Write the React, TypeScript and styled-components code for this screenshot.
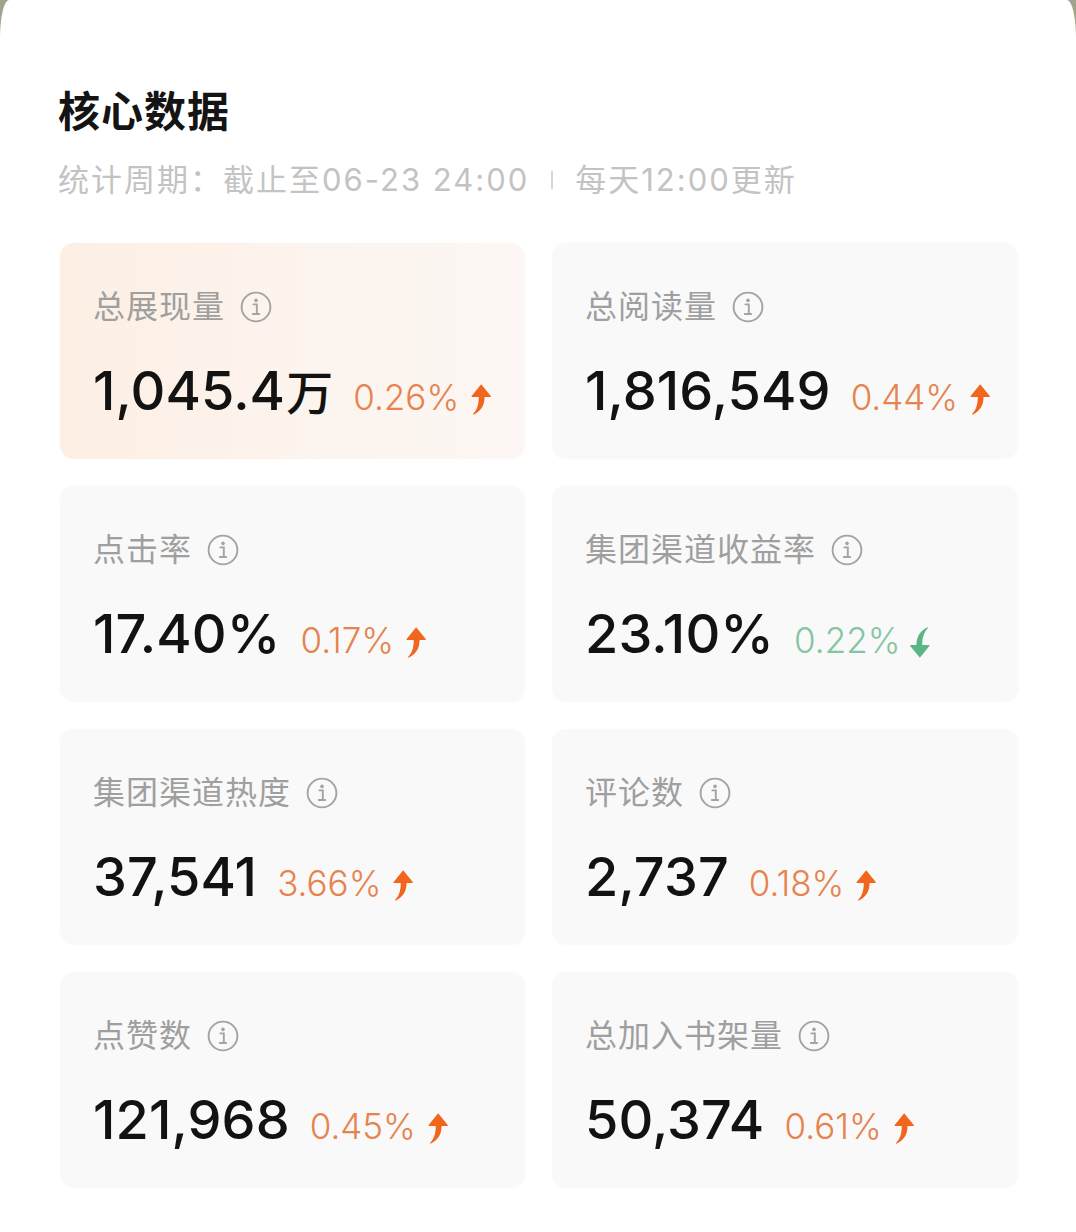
import React from 'react';
import styled, { createGlobalStyle } from 'styled-components';

const FONT_STACK = `Inter, "Noto Sans CJK SC", sans-serif`;

const GlobalStyle = createGlobalStyle`
  html, body {
    margin: 0;
    padding: 0;
    background: #a3a28c;
  }
  body {
    font-family: ${FONT_STACK};
  }
`;

type Trend = 'up' | 'down';

interface Metric {
  label: string;
  value: string;
  unit?: string;
  change: string;
  trend: Trend;
  highlight?: boolean;
}

const METRICS: Metric[] = [
  { label: '总展现量', value: '1,045.4', unit: '万', change: '0.26%', trend: 'up', highlight: true },
  { label: '总阅读量', value: '1,816,549', change: '0.44%', trend: 'up' },
  { label: '点击率', value: '17.40%', change: '0.17%', trend: 'up' },
  { label: '集团渠道收益率', value: '23.10%', change: '0.22%', trend: 'down' },
  { label: '集团渠道热度', value: '37,541', change: '3.66%', trend: 'up' },
  { label: '评论数', value: '2,737', change: '0.18%', trend: 'up' },
  { label: '点赞数', value: '121,968', change: '0.45%', trend: 'up' },
  { label: '总加入书架量', value: '50,374', change: '0.61%', trend: 'up' },
];

const Sheet = styled.div`
  min-height: 1232px;
  box-sizing: border-box;
  background: #ffffff;
  border-radius: 9px 9px 0 0 / 38px 38px 0 0;
  padding: 87px 58px 40px 58px;
`;

const Title = styled.h1`
  margin: 0;
  font-size: 42px;
  line-height: 50px;
  font-weight: 700;
  color: #141414;
  letter-spacing: 1px;
`;

const Subtitle = styled.div`
  display: flex;
  align-items: center;
  margin-top: 23px;
  font-size: 31px;
  line-height: 40px;
  letter-spacing: 2px;
  color: #c3c3c3;
  font-weight: 400;
`;

const Divider = styled.span`
  display: inline-block;
  width: 2px;
  height: 18px;
  margin: 0 22px 0 22px;
  background: #d6d6d6;
`;

const Grid = styled.div`
  display: grid;
  grid-template-columns: 465px 466px;
  grid-auto-rows: 216px;
  column-gap: 27px;
  row-gap: 27px;
  margin-top: 43px;
  margin-left: 2px;
`;

const Card = styled.div<{ $highlight?: boolean }>`
  box-sizing: border-box;
  border-radius: 14px;
  padding: 44px 32px 0 33px;
  background: ${({ $highlight }) =>
    $highlight ? 'linear-gradient(90deg, #fdefe4 0%, #fcf4ee 55%, #fcf7f4 100%)' : '#f9f9f9'};
  box-shadow: 0 0 6px rgba(0, 0, 0, 0.015);
`;

const LabelRow = styled.div`
  display: flex;
  align-items: center;
  gap: 15px;
  height: 40px;
`;

const Label = styled.span`
  font-size: 32px;
  line-height: 40px;
  color: #9f9f9f;
  letter-spacing: 1px;
  white-space: nowrap;
`;

const ValueRow = styled.div`
  display: flex;
  align-items: baseline;
  margin-top: 34px;
  height: 60px;
  white-space: nowrap;
`;

const Value = styled.span`
  font-size: 54px;
  line-height: 60px;
  font-weight: 500;
  color: #121212;
  letter-spacing: 0.1px;
`;

const Unit = styled.span`
  font-size: 47px;
  font-weight: 500;
  margin-left: 1px;
`;

const Change = styled.span<{ $trend: Trend }>`
  margin-left: 20px;
  font-size: 35px;
  font-weight: 300;
  color: ${({ $trend }) => ($trend === 'up' ? '#e6834e' : '#86c5a2')};
`;

const ArrowBox = styled.span<{ $trend: Trend }>`
  display: inline-flex;
  margin-left: 9px;
  color: ${({ $trend }) => ($trend === 'up' ? '#f0661c' : '#5cb585')};
  transform: ${({ $trend }) => ($trend === 'down' ? 'rotate(180deg) translateY(-6px)' : 'translateY(5px)')};
`;

const InfoIcon: React.FC = () => (
  <svg width="32" height="32" viewBox="0 0 32 32" fill="none">
    <circle cx="16" cy="16" r="14.4" stroke="#a3a3a3" strokeWidth="1.9" />
    <circle cx="16" cy="9.4" r="1.8" fill="#a3a3a3" />
    <path d="M13.4 13.4h3.4v9.6M12.8 23h6.4" stroke="#a3a3a3" strokeWidth="1.9" strokeLinecap="round" />
  </svg>
);

const TrendArrow: React.FC<{ trend: Trend }> = ({ trend }) => (
  <ArrowBox $trend={trend}>
    <svg width="24" height="32" viewBox="0 0 20 28" fill="currentColor">
      <path d="M11 1 L19.4 11.4 Q19.8 12.2 18.9 12.2 L14 12.2 C14 19 11.4 24.2 4.6 27.6 C3.9 27.9 3.6 27.4 4.1 26.9 C7.9 22.8 8.9 18 8.9 12.2 L3 12.2 Q2.2 12.2 2.7 11.4 Z" />
    </svg>
  </ArrowBox>
);

const MetricCard: React.FC<{ metric: Metric }> = ({ metric }) => (
  <Card $highlight={metric.highlight}>
    <LabelRow>
      <Label>{metric.label}</Label>
      <InfoIcon />
    </LabelRow>
    <ValueRow>
      <Value>
        {metric.value}
        {metric.unit && <Unit>{metric.unit}</Unit>}
      </Value>
      <Change $trend={metric.trend}>{metric.change}</Change>
      <TrendArrow trend={metric.trend} />
    </ValueRow>
  </Card>
);

const App: React.FC = () => (
  <>
    <GlobalStyle />
    <Sheet>
      <Title>核心数据</Title>
      <Subtitle>
        <span>统计周期：截止至06-23 24:00</span>
        <Divider />
        <span>每天12:00更新</span>
      </Subtitle>
      <Grid>
        {METRICS.map(m => (
          <MetricCard key={m.label} metric={m} />
        ))}
      </Grid>
    </Sheet>
  </>
);

export default App;
